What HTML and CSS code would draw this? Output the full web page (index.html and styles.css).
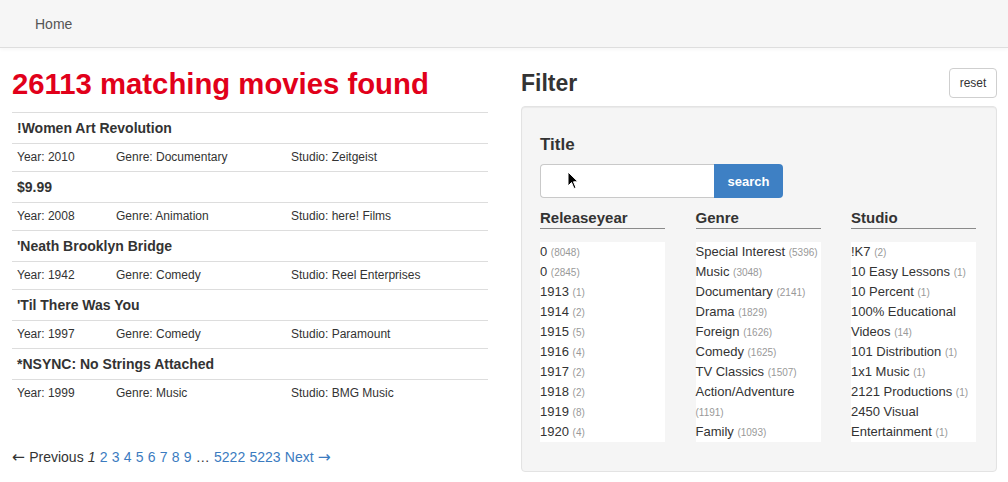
FILE: index.html
```html
<!DOCTYPE html>
<html>
<head>
<meta charset="utf-8">
<link rel="stylesheet" href="styles.css">
</head>
<body>
<nav class="navbar"><a class="nav-link" href="#">Home</a></nav>
<main class="main">
  <section class="results">
    <h1 class="count">26113 matching movies found</h1>
    <div class="movies">
      <div class="row title-row">!Women Art Revolution</div>
      <div class="row detail-row"><span>Year: 2010</span><span>Genre: Documentary</span><span>Studio: Zeitgeist</span></div>
      <div class="row title-row">$9.99</div>
      <div class="row detail-row"><span>Year: 2008</span><span>Genre: Animation</span><span>Studio: here! Films</span></div>
      <div class="row title-row">'Neath Brooklyn Bridge</div>
      <div class="row detail-row"><span>Year: 1942</span><span>Genre: Comedy</span><span>Studio: Reel Enterprises</span></div>
      <div class="row title-row">'Til There Was You</div>
      <div class="row detail-row"><span>Year: 1997</span><span>Genre: Comedy</span><span>Studio: Paramount</span></div>
      <div class="row title-row">*NSYNC: No Strings Attached</div>
      <div class="row detail-row"><span>Year: 1999</span><span>Genre: Music</span><span>Studio: BMG Music</span></div>
    </div>
    <div class="pagination"><span class="arrow">←</span> Previous <em>1</em> <a href="#">2</a> <a href="#">3</a> <a href="#">4</a> <a href="#">5</a> <a href="#">6</a> <a href="#">7</a> <a href="#">8</a> <a href="#">9</a> … <a href="#">5222</a> <a href="#">5223</a> <a href="#">Next <span class="arrow">→</span></a></div>
  </section>
  <section class="filter">
    <div class="filter-head">
      <h2 class="filter-title">Filter</h2>
      <button class="reset">reset</button>
    </div>
    <div class="well">
      <h3 class="field-label">Title</h3>
      <div class="search">
        <div class="search-input">
          <svg class="cursor" width="12" height="19" viewBox="0 0 12 19"><path d="M1 1 L1 15 L4.5 11.5 L7 17.5 L9 16.7 L6.5 10.8 L11 10.8 Z" fill="#000" stroke="#fff" stroke-width="1"/></svg>
        </div>
        <button class="search-btn">search</button>
      </div>
      <div class="facets">
        <div class="facet">
          <h4 class="facet-title">Releaseyear</h4>
          <ul class="facet-list">
            <li>0 <small>(8048)</small></li>
            <li>0 <small>(2845)</small></li>
            <li>1913 <small>(1)</small></li>
            <li>1914 <small>(2)</small></li>
            <li>1915 <small>(5)</small></li>
            <li>1916 <small>(4)</small></li>
            <li>1917 <small>(2)</small></li>
            <li>1918 <small>(2)</small></li>
            <li>1919 <small>(8)</small></li>
            <li>1920 <small>(4)</small></li>
          </ul>
        </div>
        <div class="facet">
          <h4 class="facet-title">Genre</h4>
          <ul class="facet-list">
            <li>Special Interest <small>(5396)</small></li>
            <li>Music <small>(3048)</small></li>
            <li>Documentary <small>(2141)</small></li>
            <li>Drama <small>(1829)</small></li>
            <li>Foreign <small>(1626)</small></li>
            <li>Comedy <small>(1625)</small></li>
            <li>TV Classics <small>(1507)</small></li>
            <li>Action/Adventure <small>(1191)</small></li>
            <li>Family <small>(1093)</small></li>
          </ul>
        </div>
        <div class="facet">
          <h4 class="facet-title">Studio</h4>
          <ul class="facet-list">
            <li>!K7 <small>(2)</small></li>
            <li>10 Easy Lessons <small>(1)</small></li>
            <li>10 Percent <small>(1)</small></li>
            <li>100% Educational Videos <small>(14)</small></li>
            <li>101 Distribution <small>(1)</small></li>
            <li>1x1 Music <small>(1)</small></li>
            <li>2121 Productions <small>(1)</small></li>
            <li>2450 Visual Entertainment <small>(1)</small></li>
          </ul>
        </div>
      </div>
    </div>
  </section>
</main>
</body>
</html>
```
FILE: styles.css
```css
* { box-sizing: border-box; }
html, body { margin: 0; padding: 0; background: #fff; }
body {
  font-family: "Liberation Sans", Arial, sans-serif;
  color: #333;
  font-size: 14px;
  line-height: 20px;
}
.navbar {
  height: 48px;
  background: #f6f6f6;
  border-bottom: 1px solid #dedede;
  box-shadow: 0 2px 3px rgba(0,0,0,0.03);
  display: flex;
  align-items: center;
  padding-left: 35px;
}
.nav-link { color: #555; text-decoration: none; font-size: 14px; }
.main {
  display: grid;
  grid-template-columns: 476px 476px;
  column-gap: 33px;
  padding: 18px 11px 0 12px;
}
.count {
  margin: 0 0 10px;
  font-size: 29.3px;
  line-height: 36px;
  font-weight: bold;
  color: #e1001a;
}
.row { border-top: 1px solid #dddddd; padding-left: 5px; }
.title-row { height: 31px; line-height: 30px; font-weight: bold; font-size: 14px; }
.detail-row {
  height: 28px;
  line-height: 27px;
  font-size: 12px;
  display: grid;
  grid-template-columns: 99px 175px 1fr;
}
.pagination { margin-top: 40px; font-size: 14px; line-height: 20px; color: #333; word-spacing: 0.3px; }
.pagination a { color: #3b7bbf; text-decoration: none; }
.pagination em { font-style: italic; }
.arrow { font-family: "DejaVu Sans", sans-serif; font-size: 15.5px; line-height: 10px; }
.filter-head {
  display: flex;
  justify-content: space-between;
  align-items: center;
  height: 34px;
  margin-bottom: 6px;
}
.filter-title { margin: 0; font-size: 23px; font-weight: bold; color: #333; }
.reset {
  width: 48px;
  height: 30px;
  background: #fff;
  border: 1px solid #cfcfcf;
  border-radius: 4px;
  font-family: "Liberation Sans", Arial, sans-serif;
  font-size: 12px;
  color: #333;
  padding: 0;
}
.well {
  background: #f5f5f5;
  border: 1px solid #e3e3e3;
  border-radius: 4px;
  box-shadow: inset 0 1px 1px rgba(0,0,0,0.05);
  padding: 28px 19px 28px 18px;
  height: 366px;
}
.field-label { margin: 0 0 9px; font-size: 17px; line-height: 20px; font-weight: bold; }
.search { display: flex; height: 34px; }
.search-input {
  position: relative;
  width: 174px;
  height: 34px;
  background: #fff;
  border: 1px solid #c9c9c9;
  border-right: none;
  border-radius: 4px 0 0 4px;
}
.cursor { position: absolute; left: 26px; top: 6px; }
.search-btn {
  width: 69px;
  height: 34px;
  background: #3e80c4;
  border: none;
  border-radius: 0 4px 4px 0;
  color: #fff;
  font-family: "Liberation Sans", Arial, sans-serif;
  font-weight: bold;
  font-size: 13px;
  padding: 0;
}
.facets {
  display: grid;
  grid-template-columns: 125px 125px 125px;
  column-gap: 30.5px;
  margin-top: 10px;
}
.facet-title {
  margin: 0;
  font-size: 15px;
  line-height: 20px;
  font-weight: bold;
  border-bottom: 1px solid #8a8a8a;
}
.facet-list {
  list-style: none;
  margin: 13px 0 0;
  padding: 0;
  background: #fff;
  height: 200px;
  font-size: 13px;
  line-height: 20px;
}
.facet-list small { font-size: 10px; line-height: 10px; color: #999; }
```
